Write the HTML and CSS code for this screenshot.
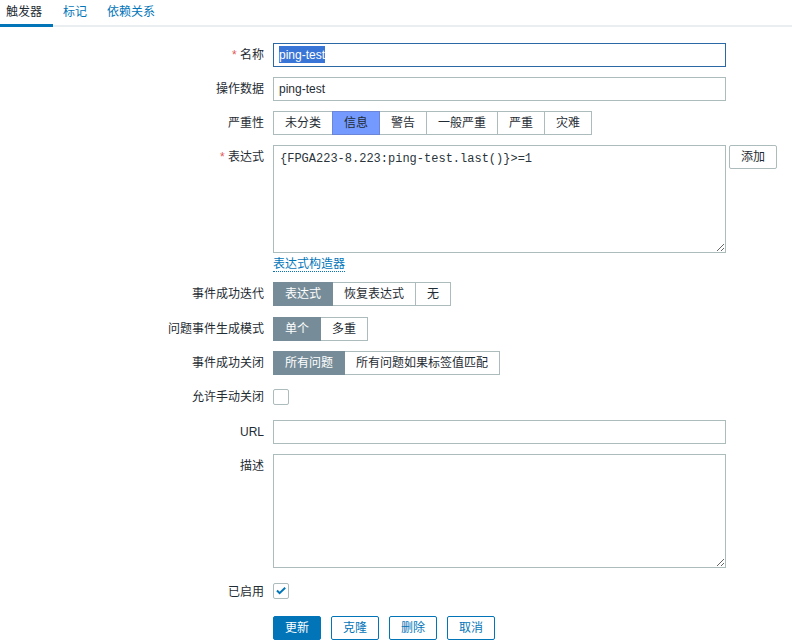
FILE: index.html
```html
<!DOCTYPE html>
<html lang="zh">
<head>
<meta charset="utf-8">
<title>触发器</title>
<link rel="stylesheet" href="styles.css">
</head>
<body>
<div class="tabs">
  <span class="tab active">触发器</span>
  <span class="tab link">标记</span>
  <span class="tab link">依赖关系</span>
</div>
<div class="form">
  <div class="lbl"><span class="req">*</span> 名称</div>
  <div class="field"><div class="input focused"><span class="sel">ping-test</span></div></div>

  <div class="lbl">操作数据</div>
  <div class="field"><div class="input">ping-test</div></div>

  <div class="lbl">严重性</div>
  <div class="field">
    <div class="seg">
      <span class="opt">未分类</span><span class="opt info">信息</span><span class="opt">警告</span><span class="opt">一般严重</span><span class="opt">严重</span><span class="opt">灾难</span>
    </div>
  </div>

  <div class="lbl"><span class="req">*</span> 表达式</div>
  <div class="field">
    <div class="expr">
      <textarea class="ta mono" readonly>{FPGA223-8.223:ping-test.last()}&gt;=1</textarea>
      <span class="btn-alt">添加</span>
    </div>
    <span class="builder">表达式构造器</span>
  </div>

  <div class="lbl">事件成功迭代</div>
  <div class="field tall">
    <div class="seg">
      <span class="opt on">表达式</span><span class="opt">恢复表达式</span><span class="opt">无</span>
    </div>
  </div>

  <div class="lbl">问题事件生成模式</div>
  <div class="field">
    <div class="seg">
      <span class="opt on">单个</span><span class="opt">多重</span>
    </div>
  </div>

  <div class="lbl">事件成功关闭</div>
  <div class="field">
    <div class="seg">
      <span class="opt on">所有问题</span><span class="opt">所有问题如果标签值匹配</span>
    </div>
  </div>

  <div class="lbl">允许手动关闭</div>
  <div class="field cb-row"><span class="checkbox"></span></div>

  <div class="lbl">URL</div>
  <div class="field"><div class="input"></div></div>

  <div class="lbl">描述</div>
  <div class="field"><textarea class="ta desc" readonly></textarea></div>

  <div class="lbl lbl-cb2">已启用</div>
  <div class="field cb-row2">
    <span class="checkbox">
      <svg width="14" height="14" viewBox="0 0 14 14"><path d="M3 6.5 L5.6 9.2 L11.2 3.8" fill="none" stroke="#0275b8" stroke-width="2"/></svg>
    </span>
  </div>

  <div class="spacer"></div>
  <div class="field buttons">
    <span class="btn primary">更新</span>
    <span class="btn">克隆</span>
    <span class="btn">删除</span>
    <span class="btn">取消</span>
  </div>
</div>
</body>
</html>
```

FILE: styles.css
```css
html, body {
  margin: 0;
  padding: 0;
  background: #ffffff;
}
body {
  font-family: "Liberation Sans", "Noto Sans CJK SC", sans-serif;
  font-size: 12px;
  color: #1f2c33;
  width: 792px;
  height: 643px;
  overflow: hidden;
}
.tabs {
  display: flex;
  border-bottom: 2px solid #ebeef0;
  margin-left: -4px;
}
.tab {
  line-height: 25px;
  padding: 0 10px;
  white-space: nowrap;
}
.tab.link {
  color: #0275b8;
}
.tab.active {
  color: #1f2c33;
  box-shadow: 0 2px 0 #0275b8, inset 0 -1px 0 #0275b8;
  padding-right: 11px;
}
.form {
  display: grid;
  grid-template-columns: 264px 1fr;
  column-gap: 9px;
  row-gap: 10px;
  padding-top: 16px;
}
.lbl {
  text-align: right;
  line-height: 24px;
  white-space: nowrap;
}
.req {
  color: #e45959;
}
.field {
  min-width: 0;
}
.input {
  box-sizing: border-box;
  width: 453px;
  height: 24px;
  border: 1px solid #acbbbc;
  padding: 0 5px;
  line-height: 22px;
  background: #fff;
  white-space: nowrap;
}
.input.focused {
  border-color: #2b68a6;
}
.sel {
  background: #3875d7;
  color: #ffffff;
  padding: 2px 0 1px;
}
.seg {
  display: inline-flex;
  height: 24px;
}
.opt {
  box-sizing: border-box;
  height: 24px;
  line-height: 22px;
  border: 1px solid #acbbbc;
  padding: 0 11px;
  margin-left: -1px;
  background: #fff;
  white-space: nowrap;
}
.opt:first-child {
  margin-left: 0;
}
.opt.info {
  background: #7499ff;
  border-color: #6b86d6;
  position: relative;
  z-index: 1;
}
.opt.on {
  background: #768d99;
  border-color: #768d99;
  color: #ffffff;
  position: relative;
  z-index: 1;
}
.expr {
  display: flex;
  align-items: flex-start;
  gap: 3px;
}
.ta {
  box-sizing: border-box;
  width: 453px;
  border: 1px solid #acbbbc;
  padding: 5px 6px;
  margin: 0;
  display: block;
  background: #fff;
  color: #1f2c33;
  outline: none;
}
.mono {
  height: 108px;
  font-family: "Liberation Mono", monospace;
  font-size: 12px;
  line-height: 16px;
  color: #2a353b;
}
.desc {
  height: 114px;
  font-family: "Liberation Sans", sans-serif;
  font-size: 12px;
}
.btn-alt {
  box-sizing: border-box;
  height: 24px;
  line-height: 22px;
  padding: 0 11px;
  border: 1px solid #acbbbc;
  border-radius: 2px;
  background: #fff;
  white-space: nowrap;
}
.builder {
  display: inline-block;
  margin-top: 4px;
  line-height: 14px;
  color: #0275b8;
  border-bottom: 1px dotted #0275b8;
}
.tall {
  height: 25px;
}
.cb-row {
  height: 25px;
  padding-top: 4px;
  box-sizing: border-box;
}
.cb-row2 {
  height: 26px;
  padding-top: 5px;
  box-sizing: border-box;
}
.lbl-cb2 {
  line-height: 28px;
}
.checkbox {
  display: block;
  box-sizing: border-box;
  width: 16px;
  height: 16px;
  border: 1px solid #acbbbc;
  border-radius: 2px;
  background: #fff;
}
.checkbox svg {
  display: block;
}
.buttons {
  display: flex;
  gap: 10px;
}
.btn {
  box-sizing: border-box;
  height: 24px;
  line-height: 22px;
  padding: 0 11px;
  border: 1px solid #0275b8;
  border-radius: 2px;
  color: #0275b8;
  background: #fff;
  white-space: nowrap;
}
.btn.primary {
  background: #0275b8;
  color: #ffffff;
}
```
